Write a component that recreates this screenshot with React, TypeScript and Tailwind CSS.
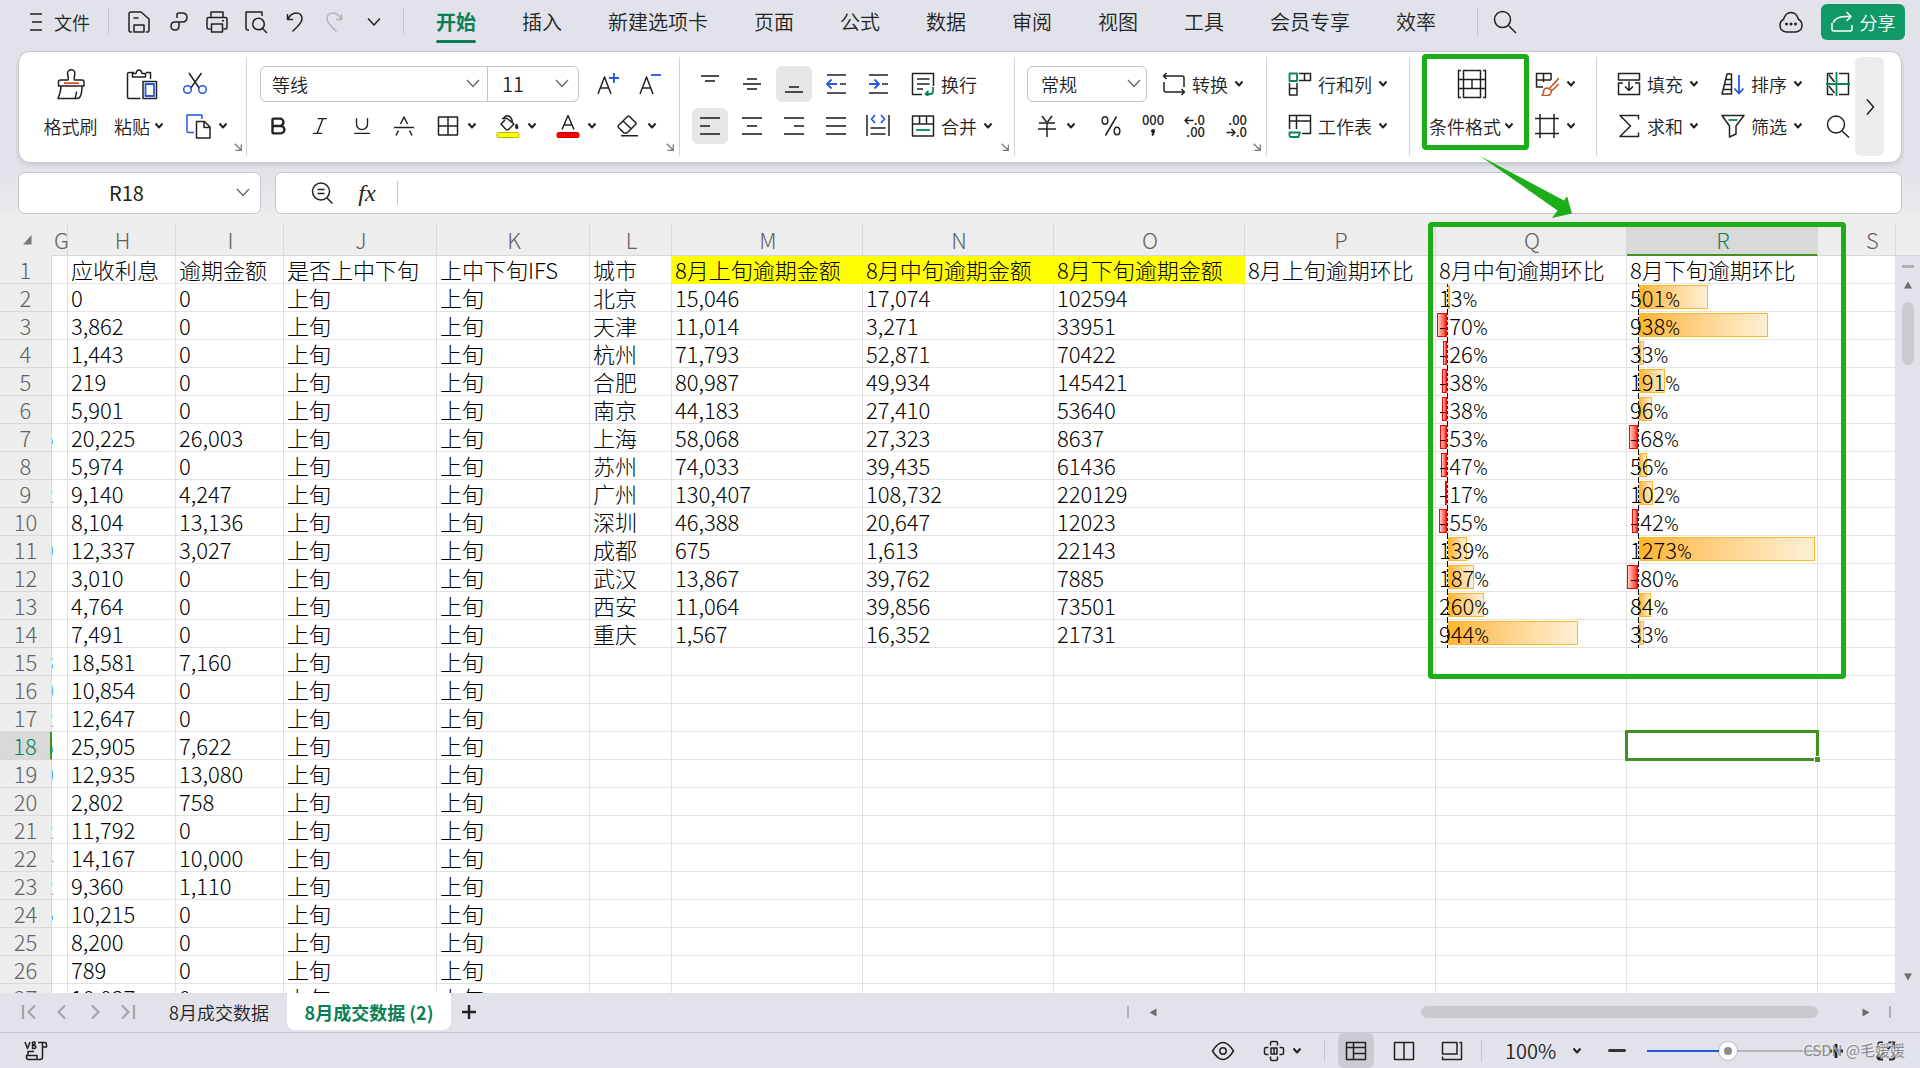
import React from "react";
import { Bold, Italic, Underline } from "lucide-react";

type SvgProps = { w?: number; h?: number; sw?: number; className?: string; children: React.ReactNode };

function Svg({ w = 24, h = 24, sw = 1.5, className = "", children }: SvgProps) {
  return (
    <svg
      width={w}
      height={h}
      viewBox={`0 0 ${w} ${h}`}
      fill="none"
      stroke="currentColor"
      strokeWidth={sw}
      strokeLinejoin="round"
      className={`shrink-0 ${className}`}
      aria-hidden="true"
    >
      {children}
    </svg>
  );
}

const BLUE = "#2558e0";
const GREEN = "#0b8457";
const ORANGE = "#c9561f";

/* ---------- small shared pieces ---------- */

const Caret = () => (
  <Svg w={10} h={8} sw={2}>
    <path d="M1.500 1.500L5 5.500L8.500 1.500" />
  </Svg>
);

const ThinCaret = ({ className = "" }: { className?: string }) => (
  <Svg w={14} h={10} sw={1.3} className={`text-[#666] ${className}`}>
    <path d="M1 1L7 7.500L13 1" />
  </Svg>
);

const Launcher = () => (
  <button aria-label="更多设置" className="flex h-[18px] w-[14px] shrink-0 items-center justify-center self-end text-[#777]">
    <Svg w={8} h={8} sw={1.3}>
      <path d="M.7 .7L7 7M7.300 1.500V7.300H1.500" />
    </Svg>
  </button>
);

function Group({ className = "", launcher = false, children }: { className?: string; launcher?: boolean; children: React.ReactNode }) {
  return (
    <div className={`flex h-[99px] shrink-0 border-r border-[#d4d4d4] ${className}`}>
      {children}
      {launcher && <Launcher />}
    </div>
  );
}

const Rows = ({ className = "", children }: { className?: string; children: React.ReactNode }) => (
  <div className={`flex flex-col gap-[6px] pt-[9px] ${className}`}>{children}</div>
);

function Sq({ label, active = false, className = "w-[36px]", children }: { label: string; active?: boolean; className?: string; children: React.ReactNode }) {
  return (
    <button
      aria-label={label}
      className={`flex h-[36px] shrink-0 items-center justify-center rounded-md ${active ? "bg-[#e6e6e6]" : ""} ${className}`}
    >
      {children}
    </button>
  );
}

function DropIcon({ label, className = "w-[60px] pl-[8px]", children }: { label: string; className?: string; children: React.ReactNode }) {
  return (
    <button aria-label={label} className={`flex h-[36px] shrink-0 items-center gap-[7px] ${className}`}>
      <span className="flex w-[24px] justify-center">{children}</span>
      <Caret />
    </button>
  );
}

function Labeled({ icon, text, caret = true }: { icon: React.ReactNode; text: string; caret?: boolean }) {
  return (
    <button className="flex h-[36px] shrink-0 items-center gap-[6px] text-[18px] whitespace-nowrap">
      {icon}
      <span>{text}</span>
      {caret && <Caret />}
    </button>
  );
}

const Sep = ({ className = "" }: { className?: string }) => <span className={`w-px shrink-0 bg-[#c4c4ca] ${className}`} />;

/* ---------- title bar ---------- */

const MENU = ["插入", "新建选项卡", "页面", "公式", "数据", "审阅", "视图", "工具", "会员专享", "效率"];

function TitleBar() {
  return (
    <header className="flex h-[51px] shrink-0 items-start pl-[29px] pr-[15px]">
      <div className="flex h-[44px] items-center">
        <button className="flex items-center gap-[11px] text-[18px]">
          <Svg w={14} h={20}>
            <path d="M1 2H13M3 10H13M1 18H13" />
          </Svg>
          文件
        </button>
        <Sep className="ml-[18px] h-[26px]" />
        <button aria-label="保存" className="ml-[18px]">
          <Svg>
            <path d="M5 22H3.500Q2 22 2 20.500V4Q2 2 4 2H14L22 9V20.500Q22 22 20.500 22H19M6.500 8H11.500M7 22V15H17V22Z" />
          </Svg>
        </button>
        <button aria-label="输出为PDF" className="ml-[17px]">
          <Svg w={22} h={24}>
            <path d="M9 8V4.500Q9 3 11 3H14Q19 3 19 7.500Q19 12 14 12H7Q3 12 3 16Q3 20 7 20Q11 20 11 16V12" />
          </Svg>
        </button>
        <button aria-label="打印" className="ml-[15px]">
          <Svg>
            <path d="M6 7V2H18V7M5.500 19H3.500Q2 19 2 17.500V9Q2 7.500 3.500 7.500H20.500Q22 7.500 22 9V17.500Q22 19 20.500 19H18.500M6.500 14H17.500V22H6.500ZM17 10.800H19" />
          </Svg>
        </button>
        <button aria-label="打印预览" className="ml-[15px]">
          <Svg>
            <path d="M5 20H4Q2 20 2 18V2H18V6" />
            <circle cx="14.500" cy="14" r="5.800" />
            <path d="M18.500 18.500L23 23" />
          </Svg>
        </button>
        <button aria-label="撤销" className="ml-[15px]">
          <Svg>
            <path d="M4.500 4V9.500H10M4.500 9.500C7 5 10 3 13 3C17 3 19 5.500 19 9C19 13 14 17 9.500 21.500" />
          </Svg>
        </button>
        <button aria-label="恢复" className="ml-[15px] text-[#b4b4b8]">
          <Svg>
            <path d="M19.500 4V9.500H14M19.500 9.500C17 5 14 3 11 3C7 3 5 5.500 5 9C5 13 9.500 17 14.500 21.500" />
          </Svg>
        </button>
        <button aria-label="自定义快速访问" className="ml-[20px]">
          <Svg w={16} h={12}>
            <path d="M2 2.500L8 9L14 2.500" />
          </Svg>
        </button>
        <Sep className="ml-[21px] h-[26px]" />
      </div>
      <nav className="ml-[32px] flex items-start gap-[46px] text-[20px] whitespace-nowrap">
        <button className="flex flex-col items-center font-bold text-[#0b7f54]">
          <span className="flex h-[40px] items-center pt-[4px]">开始</span>
          <span className="h-[3px] w-full rounded-full bg-[#0b7f54]" />
        </button>
        {MENU.map((m) => (
          <button key={m} className="flex h-[44px] items-center">
            {m}
          </button>
        ))}
      </nav>
      <div className="ml-[41px] flex h-[44px] items-center">
        <Sep className="h-[30px]" />
        <button aria-label="搜索" className="ml-[14px]">
          <Svg w={26} h={26}>
            <circle cx="10.500" cy="10.500" r="8" />
            <path d="M16.500 16.500L24 24" />
          </Svg>
        </button>
      </div>
      <div className="ml-auto flex h-[44px] items-center gap-[17px]">
        <button aria-label="云同步">
          <Svg w={26} h={24}>
            <path d="M8 22Q2 21 2 15.500Q2 11 5.500 9.500Q7.500 2.500 13 2.500Q18.500 2.500 20.500 9.500Q24 11 24 15.500Q24 21 18 22Z" />
            <g fill="currentColor" stroke="none">
              <circle cx="8.500" cy="14" r="1.500" />
              <circle cx="13" cy="14" r="1.500" />
              <circle cx="17.500" cy="14" r="1.500" />
            </g>
          </Svg>
        </button>
        <button className="flex h-[36px] w-[84px] items-center justify-center gap-[7px] rounded-md bg-[#129968] text-[18px] text-white">
          <Svg w={22} h={22}>
            <path d="M1 12V18.500Q1 20 2.500 20H19.500Q21 20 21 18.500V14M2 11.500C5 6.500 9 5 20 5.500M15.500 1L20 5.500L15.500 10" />
          </Svg>
          分享
        </button>
      </div>
    </header>
  );
}

/* ---------- ribbon ---------- */

function BarIcon({ lines }: { lines: [number, number, number][] }) {
  return (
    <Svg sw={1.6}>
      {lines.map(([x1, x2, y], i) => (
        <path key={i} d={`M${x1} ${y}H${x2}`} />
      ))}
    </Svg>
  );
}

function DecimalIcon({ top, bottom, left }: { top: string; bottom: string; left: boolean }) {
  const arrow = (
    <Svg w={10} h={9} sw={1.5}>
      <path d={left ? "M9.500 4.500H1M4.500 1L1 4.500L4.500 8" : "M.5 4.500H9M5.500 1L9 4.500L5.500 8"} />
    </Svg>
  );
  return (
    <span className="flex w-[24px] flex-col items-end text-[13px] leading-[12px] font-medium">
      <span className="flex items-center">
        {left && arrow}
        {top}
      </span>
      <span className="flex items-center">
        {!left && arrow}
        {bottom}
      </span>
    </span>
  );
}

function Ribbon() {
  return (
    <section
      aria-label="功能区"
      className="mx-[18px] flex h-[112px] shrink-0 rounded-[12px] border border-[#c6c6ce] bg-white pt-[5px] shadow-[0_2px_4px_rgba(0,0,0,0.12)]"
    >
      <Group launcher className="w-[228px] pl-[19px]">
        <button className="flex w-[65px] flex-col items-center gap-[6px] pt-[9px] text-[18px]">
          <span className="flex h-[36px] items-center">
            <Svg w={28} h={31}>
              <path d="M11 11C12 8 10.500 6.500 10.500 4.500A3.700 3.700 0 0 1 17.900 4.500C17.900 6.500 16.500 8 17.500 11H25Q27 11 27 13V17H1.500V13Q1.500 11 3.500 11ZM4 17C4 22 2.500 26 1 29.500H20C23.500 29.500 25 25 25 17M19.500 22.500Q19.500 26 18 29.500" />
              <path d="M7 14.200H22" stroke={ORANGE} strokeWidth={1.8} />
            </Svg>
          </span>
          <span className="flex h-[36px] items-center">格式刷</span>
        </button>
        <button className="ml-[4px] flex w-[64px] flex-col items-center gap-[6px] pt-[9px] text-[18px]">
          <span className="flex h-[36px] items-center pl-[5px]">
            <Svg w={32} h={31}>
              <path d="M8 3.500H3Q1.500 3.500 1.500 5V28Q1.500 29.500 3 29.500H14.500M20 3.500H24.500V10M6.500 8V4.500H10Q10.500 1 13 1Q15.500 1 16 4.500H19.500V8ZM17 29.500V12.500H30.500V29.500Z" />
              <path d="M19.500 15H28V27H19.500Z" stroke={BLUE} strokeWidth={1.8} />
            </Svg>
          </span>
          <span className="flex h-[36px] items-center gap-[4px]">
            粘贴
            <Caret />
          </span>
        </button>
        <Rows className="ml-[8px] w-[52px]">
          <Sq label="剪切" className="w-[32px]">
            <Svg>
              <path d="M6 1L16.500 16.500M18.500 1L7.500 16.500" />
              <g stroke={BLUE}>
                <circle cx="4.500" cy="17.500" r="3.800" />
                <circle cx="19.500" cy="17.500" r="3.800" />
              </g>
            </Svg>
          </Sq>
          <button aria-label="复制" className="flex h-[36px] items-center gap-[7px] pl-[7px]">
            <Svg w={25} h={25}>
              <path d="M8 18.500H2.500Q1 18.500 1 17V1H16V5" stroke={BLUE} />
              <path d="M10.500 7.500H18.500L24 13V24H10.500ZM18 7.500V13.500H24" />
            </Svg>
            <Caret />
          </button>
        </Rows>
      </Group>

      <Group launcher className="w-[433px] pl-[10px]">
        <Rows className="w-[406px]">
          <div className="flex h-[36px] items-center pl-[3px]">
            <div className="relative flex">
              <select aria-label="字体" className="h-[36px] w-[228px] appearance-none rounded-l-md border border-[#c4c4c8] bg-white pl-[11px] text-[18px]">
                <option>等线</option>
              </select>
              <ThinCaret className="pointer-events-none absolute top-[13px] right-[8px]" />
            </div>
            <div className="relative flex">
              <select aria-label="字号" className="h-[36px] w-[91px] appearance-none rounded-r-md border border-l-0 border-[#c4c4c8] bg-white pl-[14px] text-[20px]">
                <option>11</option>
              </select>
              <ThinCaret className="pointer-events-none absolute top-[13px] right-[10px]" />
            </div>
            <button aria-label="增大字号" className="ml-[18px] flex h-[36px] w-[24px] items-center">
              <Svg w={24} h={24}>
                <path d="M1 22L7.500 5L14 22M3.500 16H11.500" />
                <path d="M12 6H22M17 1V11" stroke={BLUE} strokeWidth={1.8} />
              </Svg>
            </button>
            <button aria-label="减小字号" className="ml-[18px] flex h-[36px] w-[24px] items-center">
              <Svg w={24} h={24}>
                <path d="M1 22L7.500 5L14 22M3.500 16H11.500" />
                <path d="M12 3H22" stroke={BLUE} strokeWidth={1.8} />
              </Svg>
            </button>
          </div>
          <div className="flex h-[36px] items-center">
            <Sq label="加粗" className="w-[42px]">
              <Bold size={22} strokeWidth={2.6} />
            </Sq>
            <Sq label="倾斜" className="w-[42px]">
              <Italic size={22} strokeWidth={1.5} />
            </Sq>
            <Sq label="下划线" className="w-[42px]">
              <Underline size={22} strokeWidth={1.5} />
            </Sq>
            <Sq label="删除线" className="mr-[3px] w-[42px]">
              <Svg w={22} h={22}>
                <path d="M1 12.500H21M7.500 9L11 2L14.500 9M5.500 15.500L3 20.500M16.500 15.500L19 20.500" />
              </Svg>
            </Sq>
            <DropIcon label="边框">
              <Svg w={22} h={22}>
                <path d="M1.500 2H20.500V20H1.500ZM11 2V20M1.500 11H20.500" />
              </Svg>
            </DropIcon>
            <DropIcon label="填充颜色">
              <Svg w={24} h={25}>
                <path d="M7.500 5Q9 1 12.500 2Q15.500 3 16.500 8M6 4.500H11L18 10L12.500 15.500Q11 16.500 9.500 15L5 10L9 6" />
                <path d="M20.500 10Q22.500 13.500 21 14.500Q19 14.500 20.500 10" fill="currentColor" />
                <rect x="1" y="18.500" width="22" height="5" rx="1.500" fill="#ffff00" stroke="#b5b800" strokeWidth="1" />
              </Svg>
            </DropIcon>
            <DropIcon label="字体颜色">
              <Svg w={24} h={25}>
                <path d="M6 15.500L12 1.500L18 15.500M8 11H16" />
                <rect x="1" y="18.500" width="22" height="5" rx="1.500" fill="#ff0000" stroke="#c00000" strokeWidth="1" />
              </Svg>
            </DropIcon>
            <DropIcon label="清除" className="w-[55px] pl-[8px]">
              <Svg w={24} h={24}>
                <path d="M8 19L2.500 13.500Q1.500 12.500 2.500 11.500L11.500 2.500Q12.500 1.500 13.500 2.500L19.500 8.500Q20.500 9.500 19.500 10.500L11 19ZM7 7L15.500 15M5 21.800H22" />
              </Svg>
            </DropIcon>
          </div>
        </Rows>
      </Group>

      <Group launcher className="w-[335px] pl-[12px]">
        <Rows className="w-[306px]">
          <div className="flex items-center gap-[6px]">
            <Sq label="顶端对齐"><BarIcon lines={[[3, 21, 4], [7, 17, 9]]} /></Sq>
            <Sq label="垂直居中"><BarIcon lines={[[7, 17, 7], [3, 21, 12], [7, 17, 17]]} /></Sq>
            <Sq label="底端对齐" active><BarIcon lines={[[7, 17, 15], [3, 21, 20]]} /></Sq>
            <Sq label="减少缩进量">
              <Svg>
                <path d="M3 3H22M16 12H22M3 21H22" />
                <path d="M13 12H3M7.500 7.500L3 12L7.500 16.500" stroke={BLUE} strokeWidth={1.8} />
              </Svg>
            </Sq>
            <Sq label="增加缩进量">
              <Svg>
                <path d="M3 3H22M16 12H22M3 21H22" />
                <path d="M3 12H13M8.500 7.500L13 12L8.500 16.500" stroke={BLUE} strokeWidth={1.8} />
              </Svg>
            </Sq>
            <span className="w-[3px]" />
            <Labeled
              text="换行"
              caret={false}
              icon={
                <Svg>
                  <path d="M11 22.500H1.500V1.500H22.500V14M6 7H18.500M6 12H18.500M6 17H12" />
                  <path d="M22 15V20Q22 22 19 22H15M17.500 19L14.500 22L17.500 24" stroke={GREEN} strokeWidth={1.8} />
                </Svg>
              }
            />
          </div>
          <div className="flex items-center gap-[6px]">
            <Sq label="左对齐" active><BarIcon lines={[[2, 22, 4], [2, 12, 12], [2, 22, 20]]} /></Sq>
            <Sq label="水平居中"><BarIcon lines={[[2, 22, 4], [7, 17, 12], [2, 22, 20]]} /></Sq>
            <Sq label="右对齐"><BarIcon lines={[[2, 22, 4], [12, 22, 12], [2, 22, 20]]} /></Sq>
            <Sq label="两端对齐"><BarIcon lines={[[2, 22, 4], [2, 22, 12], [2, 22, 20]]} /></Sq>
            <Sq label="分散对齐">
              <Svg>
                <path d="M1 1V22M23 1V22M4.500 14H19.500M4.500 20H19.500" />
                <path d="M9 1L5.500 5L9 9M15 1L18.500 5L15 9" stroke={BLUE} strokeWidth={1.8} />
              </Svg>
            </Sq>
            <span className="w-[3px]" />
            <Labeled
              text="合并"
              icon={
                <Svg>
                  <path d="M1.500 2H22.500V22H1.500ZM1.500 10H22.500M8.500 2V10M15.500 2V10" />
                  <path d="M5 16H19" stroke={GREEN} strokeWidth={1.8} />
                </Svg>
              }
            />
          </div>
        </Rows>
      </Group>

      <Group launcher className="w-[252px] pl-[12px]">
        <Rows className="w-[223px]">
          <div className="flex h-[36px] items-center gap-[15px]">
            <div className="relative flex">
              <select aria-label="数字格式" className="h-[36px] w-[120px] appearance-none rounded-md border border-[#c4c4c8] bg-white pl-[13px] text-[18px]">
                <option>常规</option>
              </select>
              <ThinCaret className="pointer-events-none absolute top-[13px] right-[6px]" />
            </div>
            <Labeled
              text="转换"
              icon={
                <Svg>
                  <path d="M4.500 1L1.500 4L4.500 7M1.500 4H20Q22 4 22 6V15M19.500 23L22.500 20L19.500 17M22.500 20H4Q2 20 2 18V10" />
                </Svg>
              }
            />
          </div>
          <div className="flex h-[36px] items-center">
            <DropIcon label="货币" className="w-[66px] pl-[8px]">
              <Svg>
                <path d="M7 2L11.500 8M17 2L12.500 8M4 9H20M3 15H21M12 9V23" />
              </Svg>
            </DropIcon>
            <Sq label="百分比样式">
              <Svg w={20} h={24}>
                <ellipse cx="4" cy="6.500" rx="2.800" ry="3.800" />
                <ellipse cx="16" cy="17" rx="2.800" ry="3.800" />
                <path d="M15.500 2.500L4.500 21.500" />
              </Svg>
            </Sq>
            <Sq label="千位分隔样式" className="ml-[6px] w-[36px]">
              <span className="flex flex-col items-center text-[13px] leading-[12px] font-medium">
                <span>000</span>
                <Svg w={6} h={11} className="mt-[1px]">
                  <path d="M3.500 4.500Q4 6.500 2 8.500" strokeWidth={2} />
                  <circle cx="3" cy="4" r="1.300" fill="currentColor" />
                </Svg>
              </span>
            </Sq>
            <Sq label="增加小数位数" className="ml-[7px] w-[30px]">
              <DecimalIcon left top=".0" bottom=".00" />
            </Sq>
            <Sq label="减少小数位数" className="ml-[12px] w-[30px]">
              <DecimalIcon left={false} top=".00" bottom=".0" />
            </Sq>
          </div>
        </Rows>
      </Group>

      <Group className="w-[143px] pl-[21px]">
        <Rows>
          <Labeled
            text="行和列"
            icon={
              <Svg>
                <path d="M1.500 11V23H9V11M1.500 16.500H9M11 1.500H22.500V8.500H11M16.500 1.500V8.500" />
                <path d="M1.500 1.500H9V9H1.500Z" stroke={GREEN} strokeWidth={1.8} />
              </Svg>
            }
          />
          <Labeled
            text="工作表"
            icon={
              <Svg>
                <path d="M1.500 15V1.500H22.500V19.500H14M1.500 7H22.500M8.500 1.500V15" />
                <path d="M1.500 18.500H12L10.500 23H3Q1.500 23 1.500 21.500Z" stroke={GREEN} strokeWidth={1.8} />
              </Svg>
            }
          />
        </Rows>
      </Group>

      <Group className="w-[187px] pl-[12px]">
        <button className="relative flex w-[107px] flex-col gap-[6px] pt-[9px] text-[18px] whitespace-nowrap">
          <span className="flex h-[36px] items-center justify-center pr-[8px]">
            <Svg w={30} h={30}>
              <path d="M6.500 1.500H23.500V28.500H6.500ZM6.500 10.500H23.500M6.500 19.500H23.500M15 10.500V19.500M4 1.500H1.500V28.500H4M26 1.500H28.500V28.500H26M1.500 10.500H6.500M1.500 19.500H6.500M23.500 10.500H28.500M23.500 19.500H28.500" />
            </Svg>
          </span>
          <span className="flex h-[36px] items-center gap-[3px] pl-[7px]">
            条件格式
            <Caret />
          </span>
          <span className="pointer-events-none absolute -top-[3px] left-0 h-[96px] w-full rounded-[4px] border-[5px] border-[#1cad19]" />
          <svg className="pointer-events-none absolute top-[99px] left-[58px] z-20 fill-[#1cad19]" width="96" height="64" viewBox="0 0 96 64" aria-hidden="true">
            <path d="M0 0L84 44.500L87 40L92 57.500L72 62L77.500 54.500Z" />
          </svg>
        </button>
        <Rows className="ml-[6px]">
          <DropIcon label="表格样式" className="">
            <Svg>
              <path d="M8 15H1.500V1.500H16V8M1.500 8H16M8.500 1.500V10" />
              <path d="M24 6L14.500 16.500M24 12L17 18.500M7 23.500Q9 22 8.500 19Q10 15 14 16.500Q18 18.500 15 22.500Q12 24.500 7 23.500Z" stroke={ORANGE} strokeWidth={1.6} />
            </Svg>
          </DropIcon>
          <DropIcon label="单元格样式" className="">
            <Svg>
              <path d="M5 0V24M19 0V24M0 4.500H24M0 19.500H24" />
            </Svg>
          </DropIcon>
        </Rows>
      </Group>

      <div className="flex gap-[22px] pl-[20px]">
        <Rows>
          <Labeled
            text="填充"
            icon={
              <Svg>
                <path d="M1.500 8V1.500H22.500V8ZM6 11H1.500V22.500H22.500V11H18M12 9.500V18M8 14.500L12 18.500L16 14.500" />
              </Svg>
            }
          />
          <Labeled
            text="求和"
            icon={
              <Svg>
                <path d="M21.500 5.500V1.500H3L13.500 12L3 22.500H21.500V18.500" />
              </Svg>
            }
          />
        </Rows>
        <Rows>
          <Labeled
            text="排序"
            icon={
              <Svg>
                <path d="M1 22L6 2H10.500V22ZM3.500 12.500H10.500M2 17.500H10.500M5 7.500H10.500" />
                <path d="M18 3V21M13.500 16.500L18 21.500L22.500 16.500" stroke={BLUE} strokeWidth={1.8} />
              </Svg>
            }
          />
          <Labeled
            text="筛选"
            icon={
              <Svg>
                <path d="M6 1.500H1L8.500 12V23L15 20V12L23 1.500H18M6 1.500H18" />
                <path d="M7.500 6H16.500" stroke={GREEN} strokeWidth={1.8} />
              </Svg>
            }
          />
        </Rows>
        <Rows className="ml-px">
          <Sq label="冻结窗格" className="w-[24px]">
            <Svg>
              <path d="M7 1.500H1.500V22.500H7M13 1.500H22.500V22.500H13M3 3L8.500 10M3 14L8.500 21M22.500 9.500V14.500" />
              <path d="M10.500 0V24M0 12H24" stroke={GREEN} strokeWidth={1.8} />
            </Svg>
          </Sq>
          <Sq label="查找" className="w-[24px]">
            <Svg>
              <circle cx="10" cy="10.500" r="8.500" />
              <path d="M16 17L23 23.500" />
            </Svg>
          </Sq>
        </Rows>
      </div>
      <button aria-label="展开更多" className="mr-[17px] ml-auto flex h-[99px] w-[29px] shrink-0 items-center justify-center rounded-md bg-[#ededed]">
        <Svg w={12} h={18}>
          <path d="M3 1.500L9.500 9L3 16.500" />
        </Svg>
      </button>
    </section>
  );
}

/* ---------- formula bar ---------- */

function FormulaBar() {
  return (
    <section aria-label="编辑栏" className="mt-[9px] flex h-[42px] shrink-0 gap-[14px] bg-linear-to-b from-[#e2e2ea] to-[#ebebed] px-[18px]">
      <div className="flex w-[243px] items-center rounded-[7px] border border-[#c6c6ce] bg-white pr-[10px]">
        <input aria-label="名称框" defaultValue="R18" className="w-0 grow bg-transparent pr-[2px] text-center text-[20px] font-normal outline-none" />
        <ThinCaret />
      </div>
      <div className="flex grow items-center rounded-[7px] border border-[#c6c6ce] bg-white pl-[34px]">
        <button aria-label="查看公式">
          <Svg>
            <circle cx="11" cy="10.500" r="8.500" />
            <path d="M7.500 8.500H14.500M7.500 12.500H14.500M17 17L22.500 22.500" />
          </Svg>
        </button>
        <button aria-label="插入函数" className="ml-[21px] w-[24px] font-['Liberation_Serif',serif] text-[24px] leading-[30px] italic">
          fx
        </button>
        <Sep className="ml-[18px] h-[24px]" />
        <input aria-label="公式" className="h-full w-0 grow bg-transparent px-2 text-[20px] outline-none" />
      </div>
    </section>
  );
}

/* ---------- sheet ---------- */

const COLS: [string, string][] = [
  ["G", "w-[16px]"],
  ["H", "w-[108px]"],
  ["I", "w-[108px]"],
  ["J", "w-[153px]"],
  ["K", "w-[153px]"],
  ["L", "w-[82px]"],
  ["M", "w-[191px]"],
  ["N", "w-[191px]"],
  ["O", "w-[191px]"],
  ["P", "w-[191px]"],
  ["Q", "w-[191px]"],
  ["R", "w-[191px]"],
  ["S", ""],
];

const HEAD = ["", "应收利息", "逾期金额", "是否上中下旬", "上中下旬IFS", "城市", "8月上旬逾期金额", "8月中旬逾期金额", "8月下旬逾期金额", "8月上旬逾期环比", "8月中旬逾期环比", "8月下旬逾期环比", ""];

// visible edge of column G, then H and I
const LEFT: [string, string, string][] = [
  ["", "0", "0"],
  ["", "3,862", "0"],
  ["", "1,443", "0"],
  ["", "219", "0"],
  ["", "5,901", "0"],
  ["5", "20,225", "26,003"],
  ["", "5,974", "0"],
  ["2", "9,140", "4,247"],
  ["", "8,104", "13,136"],
  ["9", "12,337", "3,027"],
  ["", "3,010", "0"],
  ["", "4,764", "0"],
  ["", "7,491", "0"],
  ["3", "18,581", "7,160"],
  ["0", "10,854", "0"],
  ["2", "12,647", "0"],
  ["6", "25,905", "7,622"],
  ["0", "12,935", "13,080"],
  ["", "2,802", "758"],
  ["2", "11,792", "0"],
  ["4", "14,167", "10,000"],
  ["2", "9,360", "1,110"],
  ["5", "10,215", "0"],
  ["", "8,200", "0"],
  ["", "789", "0"],
  ["", "10,037", "0"],
];

const CITY: [string, string, string, string, number, number][] = [
  ["北京", "15,046", "17,074", "102594", 13, 501],
  ["天津", "11,014", "3,271", "33951", -70, 938],
  ["杭州", "71,793", "52,871", "70422", -26, 33],
  ["合肥", "80,987", "49,934", "145421", -38, 191],
  ["南京", "44,183", "27,410", "53640", -38, 96],
  ["上海", "58,068", "27,323", "8637", -53, -68],
  ["苏州", "74,033", "39,435", "61436", -47, 56],
  ["广州", "130,407", "108,732", "220129", -17, 102],
  ["深圳", "46,388", "20,647", "12023", -55, -42],
  ["成都", "675", "1,613", "22143", 139, 1273],
  ["武汉", "13,867", "39,762", "7885", 187, -80],
  ["西安", "11,064", "39,856", "73501", 260, 84],
  ["重庆", "1,567", "16,352", "21731", 944, 33],
];

const PX_PER_PERCENT = 0.138;

function DataBar({ value }: { value: number }) {
  const width = Math.max(2, Math.round(Math.abs(value) * PX_PER_PERCENT));
  return (
    <div className="relative h-[27px] pl-[3px]">
      {value >= 0 ? (
        <span
          className="absolute top-[1px] left-[12px] h-[24px] border border-[#ffb628] bg-linear-to-r from-[#ffb628] to-[#fff0d4]"
          style={{ width }}
        />
      ) : (
        <span
          className="absolute top-[1px] right-[calc(100%-11px)] h-[24px] border border-[#ff0000] bg-linear-to-l from-[#ff0000] to-[#ffc8c8]"
          style={{ width }}
        />
      )}
      <span className="absolute top-0 -bottom-px left-[11px] border-l border-dashed border-black" />
      <span className="relative">
        {value < 0 && <span className="mr-[3px]">-</span>}
        {Math.abs(value)}
        <span className="font-[Roboto,sans-serif] text-[20px]">%</span>
      </span>
    </div>
  );
}

const CELL = "border-r border-b border-[#e2e2e2] p-0 text-left font-light";

function Sheet() {
  return (
    <section aria-label="工作表" className="flex min-h-0 grow overflow-hidden bg-[#ededed] pt-[10px]">
      <div className="min-w-0 grow">
        <table className="w-full table-fixed border-separate border-spacing-0 text-[22px] leading-[27px] whitespace-nowrap text-black">
          <colgroup>
            <col className="w-[52px]" />
            {COLS.map(([c, w]) => (
              <col key={c} className={w} />
            ))}
          </colgroup>
          <thead>
            <tr className="h-[32px] text-[#606060]">
              <th className="border-b border-[#ededed] p-0">
                <span className="flex justify-end pr-[20px]">
                  <svg width="9" height="10" viewBox="0 0 9 10" fill="#777" aria-hidden="true">
                    <path d="M8.500 0V9.500H0Z" />
                  </svg>
                </span>
              </th>
              {COLS.map(([c]) => (
                <th
                  key={c}
                  className={`relative h-[32px] border-r border-b p-0 text-center font-light ${c === "S" ? "pl-[32px]" : "pl-[2px]"} ${
                    c === "R" ? "border-r-[#d8d8d8] border-b-[#43911f] bg-[#d9d9d9] text-[#0b8457] shadow-[inset_0_-1px_0_#43911f]" : "border-[#d8d8d8]"
                  }`}
                >
                  {c}
                  {c === "Q" && (
                    <span className="pointer-events-none absolute -top-[2px] -left-[8px] z-20 h-[457px] w-[418px] rounded-[4px] border-[5px] border-[#1cad19]" />
                  )}
                </th>
              ))}
            </tr>
          </thead>
          <tbody className="bg-white">
            <tr className="h-[28px]">
              <th className="border-r border-b border-[#d8d8d8] bg-[#ededed] p-0 text-center font-light text-[#606060]">1</th>
              {HEAD.map((t, i) => (
                <td
                  key={i}
                  className={
                    i >= 6 && i <= 8
                      ? "border-r border-b border-[#ffff00] bg-[#ffff00] p-0 pl-[3px] text-left font-light"
                      : `${CELL} pl-[3px]`
                  }
                >
                  {t}
                </td>
              ))}
            </tr>
            {LEFT.map(([g, h, i], r) => {
              const city = CITY[r];
              const active = r + 2 === 18;
              return (
                <tr key={r} className="h-[28px]">
                  <th
                    className={`border-b p-0 text-center font-light ${
                      active
                        ? "border-r-2 border-r-[#43911f] border-b-[#d8d8d8] bg-[#d9d9d9] text-[#0b8457]"
                        : "border-r border-[#d8d8d8] bg-[#ededed] text-[#606060]"
                    }`}
                  >
                    {r + 2}
                  </th>
                  <td className={CELL}>
                    <span className="flex w-[2px] justify-end overflow-hidden text-[#4aa8e0]">{g}</span>
                  </td>
                  <td className={`${CELL} pl-[3px]`}>{h}</td>
                  <td className={`${CELL} pl-[3px]`}>{i}</td>
                  <td className={`${CELL} pl-[3px]`}>上旬</td>
                  <td className={`${CELL} pl-[3px]`}>上旬</td>
                  <td className={`${CELL} pl-[3px]`}>{city?.[0]}</td>
                  <td className={`${CELL} pl-[3px]`}>{city?.[1]}</td>
                  <td className={`${CELL} pl-[3px]`}>{city?.[2]}</td>
                  <td className={`${CELL} pl-[3px]`}>{city?.[3]}</td>
                  <td className={CELL} />
                  <td className={CELL}>{city && <DataBar value={city[4]} />}</td>
                  <td className={`${CELL} relative`}>
                    {city && <DataBar value={city[5]} />}
                    {active && (
                      <span className="absolute -inset-[2px] z-10 border-[3px] border-[#43911f]">
                        <span className="absolute -right-[5px] -bottom-[5px] h-[7px] w-[7px] border border-white bg-[#43911f]" />
                      </span>
                    )}
                  </td>
                  <td className={CELL} />
                </tr>
              );
            })}
          </tbody>
        </table>
      </div>
      <div className="mt-[31px] flex w-[24px] shrink-0 flex-col items-center border-t border-[#d8d8d8] bg-[#e2e2ea] pt-[9px] pb-[12px]">
        <span className="h-[3px] w-[12px] bg-[#b0b0b4]" />
        <button aria-label="向上滚动" className="mt-[13px]">
          <svg width="8" height="8" viewBox="0 0 8 8" fill="#6c6c6c" aria-hidden="true">
            <path d="M4 .5L8 7.500H0Z" />
          </svg>
        </button>
        <span className="mt-[13px] h-[63px] w-[12px] rounded-full bg-[#cacad0]" />
        <button aria-label="向下滚动" className="mt-auto">
          <svg width="8" height="8" viewBox="0 0 8 8" fill="#6c6c6c" aria-hidden="true">
            <path d="M4 7.500L8 .5H0Z" />
          </svg>
        </button>
      </div>
    </section>
  );
}

/* ---------- sheet tabs and status bar ---------- */

function NavButton({ label, d }: { label: string; d: string }) {
  return (
    <button aria-label={label} className="flex w-[20px] justify-center text-[#a4a4aa]">
      <Svg w={16} h={18} sw={2.2}>
        <path d={d} />
      </Svg>
    </button>
  );
}

function SheetTabs() {
  return (
    <section aria-label="工作表标签" className="flex h-[40px] shrink-0 items-start border-b border-[#c8c8cc] text-[18px]">
      <div className="flex h-[37px] items-center gap-[13px] pl-[19px]">
        <NavButton label="第一张" d="M2 2V16M14 2.500L7.500 9L14 15.500" />
        <NavButton label="上一张" d="M11 2.500L4.500 9L11 15.500" />
        <NavButton label="下一张" d="M5 2.500L11.500 9L5 15.500" />
        <NavButton label="最后一张" d="M2 2.500L8.500 9L2 15.500M14 2V16" />
      </div>
      <button className="ml-[30px] h-[37px] w-[102px] whitespace-nowrap">8月成交数据</button>
      <button className="ml-[17px] h-[37px] w-[164px] rounded-b-[8px] bg-white font-bold whitespace-nowrap text-[#0b7f54]">8月成交数据 (2)</button>
      <button aria-label="新建工作表" className="ml-[10px] flex h-[37px] items-center">
        <Svg w={16} h={16} sw={2.4}>
          <path d="M8 1V15M1 8H15" />
        </Svg>
      </button>
      <div className="ml-auto flex h-[38px] items-center pr-[29px]">
        <span className="h-[12px] w-[2px] bg-[#b0b0b4]" />
        <button aria-label="向左滚动" className="ml-[20px]">
          <svg width="8" height="9" viewBox="0 0 8 9" fill="#6c6c6c" aria-hidden="true">
            <path d="M.5 4.500L7.500 .5V8.500Z" />
          </svg>
        </button>
        <span className="ml-[264px] h-[12px] w-[397px] rounded-full bg-[#c9c9ce]" />
        <button aria-label="向右滚动" className="ml-[44px]">
          <svg width="8" height="9" viewBox="0 0 8 9" fill="#6c6c6c" aria-hidden="true">
            <path d="M7.500 4.500L.5 .5V8.500Z" />
          </svg>
        </button>
        <span className="ml-[19px] h-[12px] w-[2px] bg-[#b0b0b4]" />
      </div>
    </section>
  );
}

function StatusBar() {
  return (
    <footer className="relative flex h-[35px] shrink-0 items-center pr-[24px] pl-[24px]">
      <button aria-label="VB宏">
        <Svg w={24} h={20}>
          <path d="M1 1L3.500 7.500L6 1M8.500 1V7.500H11Q12.500 6 11 4.500H8.500M8.500 4Q12 3.500 11 1H8.500M14 1.500H21Q22.500 1.500 22.500 4V6H18.500M18.500 1.500V16Q18.500 18.500 16 18.500H4.500Q2.500 18.500 2.500 16V14.500H13V18M4 14V10.500H10" />
        </Svg>
      </button>
      <div className="ml-auto flex h-full items-center">
        <button aria-label="护眼模式">
          <Svg w={24} h={22}>
            <path d="M1.500 11Q12 -6 22.500 11Q12 28 1.500 11Z" />
            <circle cx="12" cy="11" r="3.200" />
          </Svg>
        </button>
        <button aria-label="阅读模式" className="ml-[28px] flex items-center gap-[7px]">
          <Svg w={22} h={22}>
            <path d="M7.500 5.500V3Q7.500 1.500 9 1.500H13Q14.500 1.500 14.500 3V5.500M7.500 16.500V19Q7.500 20.500 9 20.500H13Q14.500 20.500 14.500 19V16.500M5.500 7.500H3Q1.500 7.500 1.500 9V13Q1.500 14.500 3 14.500H5.500M16.500 7.500H19Q20.500 7.500 20.500 9V13Q20.500 14.500 19 14.500H16.500M8 8H14V14H8ZM11 8V14" />
          </Svg>
          <Caret />
        </button>
        <Sep className="ml-[22px] h-[22px]" />
        <button aria-label="普通视图" className="ml-[13px] flex h-full w-[36px] items-center justify-center rounded-md bg-[#cbcbd4]">
          <Svg w={22} h={20}>
            <path d="M1.500 1.500H20.500V18.500H1.500ZM8.500 1.500V18.500M1.500 6.500H20.500M8.500 12.500H20.500" />
          </Svg>
        </button>
        <button aria-label="分页预览" className="ml-[19px]">
          <Svg w={22} h={20}>
            <path d="M1.500 1.500H20.500V18.500H1.500ZM11 1.500V18.500" />
          </Svg>
        </button>
        <button aria-label="页面布局" className="ml-[26px]">
          <Svg w={22} h={20}>
            <path d="M1.500 1.500H16V13H1.500ZM18.500 1.500H20.500V18.500H1.500V15.500" />
          </Svg>
        </button>
        <Sep className="ml-[18px] h-[22px]" />
        <div className="relative ml-[23px] flex items-center">
          <select aria-label="缩放比例" className="w-[79px] appearance-none bg-transparent text-[20px]">
            <option>100%</option>
          </select>
          <span className="pointer-events-none absolute right-[2px]">
            <Caret />
          </span>
        </div>
        <button aria-label="缩小" className="ml-[24px] flex h-[20px] w-[18px] items-center">
          <span className="h-[3px] w-full rounded-full bg-[#333]" />
        </button>
        <input
          type="range"
          aria-label="缩放"
          min={0}
          max={100}
          defaultValue={45}
          className="ml-[21px] h-[2px] w-[178px] appearance-none bg-linear-to-r from-[#2558e0] from-45% to-[#b4b4b8] to-45% [&::-webkit-slider-thumb]:h-[18px] [&::-webkit-slider-thumb]:w-[18px] [&::-webkit-slider-thumb]:appearance-none [&::-webkit-slider-thumb]:rounded-full [&::-webkit-slider-thumb]:border-[5px] [&::-webkit-slider-thumb]:border-white [&::-webkit-slider-thumb]:bg-[#8c8c8c] [&::-webkit-slider-thumb]:shadow-[0_0_2px_rgba(0,0,0,0.4)]"
        />
        <button aria-label="放大" className="ml-[3px]">
          <Svg w={16} h={16} sw={2.8}>
            <path d="M8 1V15M1 8H15" />
          </Svg>
        </button>
        <button aria-label="全屏" className="ml-[32px]">
          <Svg w={20} h={20} sw={1.8}>
            <path d="M1.500 7V4Q1.500 1.500 4 1.500H7M12.500 1.500H18.500V7.500M18.500 1.500L11.500 8.500M1.500 13V16Q1.500 18.500 4 18.500H7M13 18.500H16Q18.500 18.500 18.500 16V13M1.500 18.500L8 12" />
          </Svg>
        </button>
      </div>
      <span className="pointer-events-none absolute right-[15px] bottom-[8px] text-[15px] leading-[20px] font-normal whitespace-nowrap text-[#8a8a8e] [text-shadow:-1px_-1px_0_#f0f0f4]">
        CSDN @毛媛媛
      </span>
    </footer>
  );
}

export default function App() {
  return (
    <div className="flex h-screen flex-col overflow-hidden bg-[#e2e2ea] font-['Noto_Sans_CJK_SC','Noto_Sans',sans-serif] leading-[26px] font-[350] text-[#222]">
      <TitleBar />
      <Ribbon />
      <FormulaBar />
      <Sheet />
      <SheetTabs />
      <StatusBar />
    </div>
  );
}
